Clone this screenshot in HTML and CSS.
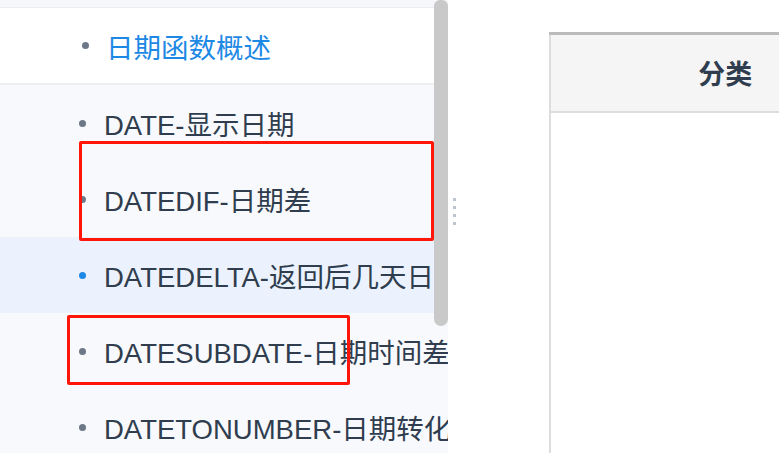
FILE: index.html
```html
<!DOCTYPE html>
<html lang="zh">
<head>
    <meta charset="UTF-8">
    <meta name="viewport" content="width=device-width, initial-scale=1.0">
    <title>日期函数</title>
    <link rel="stylesheet" href="styles.css">
</head>
<body>
    <div class="page">
        <aside class="sidebar">
            <div class="sidebar__top"></div>
            <div class="sidebar__overview">
                <span class="dot"></span>
                <a class="overview-link">日期函数概述</a>
            </div>
            <ul class="menu">
                <li class="menu__item"><span class="dot"></span>DATE-显示日期</li>
                <li class="menu__item"><span class="dot"></span>DATEDIF-日期差</li>
                <li class="menu__item is-active"><span class="dot"></span>DATEDELTA-返回后几天日期</li>
                <li class="menu__item"><span class="dot"></span>DATESUBDATE-日期时间差</li>
                <li class="menu__item"><span class="dot"></span>DATETONUMBER-日期转化为数字</li>
            </ul>
            <div class="scroll-thumb"></div>
        </aside>

        <div class="splitter">
            <div class="splitter__grip">
                <span></span><span></span><span></span><span></span>
            </div>
        </div>

        <main class="content">
            <table class="fn-table">
                <thead>
                    <tr>
                        <th>分类</th>
                        <th>函数</th>
                    </tr>
                </thead>
                <tbody>
                    <tr>
                        <td></td>
                        <td></td>
                    </tr>
                </tbody>
            </table>
        </main>

        <div class="mark mark--one"></div>
        <div class="mark mark--two"></div>
    </div>
</body>
</html>
```

FILE: styles.css
```css
* {
    box-sizing: border-box;
    margin: 0;
    padding: 0;
}

body {
    width: 779px;
    height: 453px;
    overflow: hidden;
    background-color: #fff;
    font-family: 'Liberation Sans', Arial, 'Noto Sans CJK SC', sans-serif;
    color: #2f3d4e;
}

.page {
    position: relative;
    display: flex;
    height: 453px;
}

/* left menu */
.sidebar {
    position: relative;
    width: 448px;
    flex-shrink: 0;
    background-color: #f8f9fc;
    overflow: hidden;
}

.sidebar__top {
    height: 8px;
    background-color: #f6f7fb;
    border-bottom: 1px solid #ebecee;
}

.sidebar__overview {
    display: flex;
    align-items: center;
    height: 77px;
    padding-left: 82px;
    background-color: #fff;
    border-bottom: 2px solid #eeeff1;
    white-space: nowrap;
}

.overview-link {
    margin-left: 17px;
    font-size: 27.5px;
    color: #1e88e5;
}

.dot {
    display: inline-block;
    width: 7px;
    height: 7px;
    border-radius: 50%;
    background-color: #6c7888;
    flex-shrink: 0;
}

.menu {
    list-style: none;
}

.menu__item {
    display: flex;
    align-items: center;
    height: 76px;
    padding-left: 79px;
    font-size: 27.5px;
    white-space: nowrap;
}

.menu__item .dot {
    margin-right: 18px;
}

.menu__item.is-active {
    background-color: #ebf2fd;
}

.menu__item.is-active .dot {
    background-color: #1e88e5;
}

.scroll-thumb {
    position: absolute;
    top: 0;
    left: 434px;
    width: 14px;
    height: 326px;
    border-radius: 6px 6px 7px 7px;
    background-color: #c9c9c9;
}

/* drag handle between panes */
.splitter {
    width: 101px;
    flex-shrink: 0;
    padding-top: 198px;
    padding-left: 5px;
}

.splitter__grip {
    display: flex;
    flex-direction: column;
    gap: 5px;
}

.splitter__grip span {
    width: 3px;
    height: 3px;
    background-color: #bfc5ce;
}

/* right table */
.content {
    flex: 1;
    padding-top: 32px;
    overflow: hidden;
}

.fn-table {
    width: 700px;
    height: 440px;
    border-collapse: collapse;
    border-top: 3px solid #bbbbbb;
    border-left: 2px solid #dddddd;
}

.fn-table th {
    width: 348px;
    height: 78px;
    background-color: #f5f5f5;
    border-bottom: 2px solid #dddddd;
    font-size: 27px;
    font-weight: bold;
    color: #2f3d4e;
    text-align: center;
}

.fn-table td {
    vertical-align: top;
}

/* red review marks */
.mark {
    position: absolute;
    border: 3px solid #ff1608;
    border-radius: 2px;
}

.mark--one {
    left: 79px;
    top: 141px;
    width: 355px;
    height: 100px;
}

.mark--two {
    left: 67px;
    top: 315px;
    width: 283px;
    height: 70px;
}
```
